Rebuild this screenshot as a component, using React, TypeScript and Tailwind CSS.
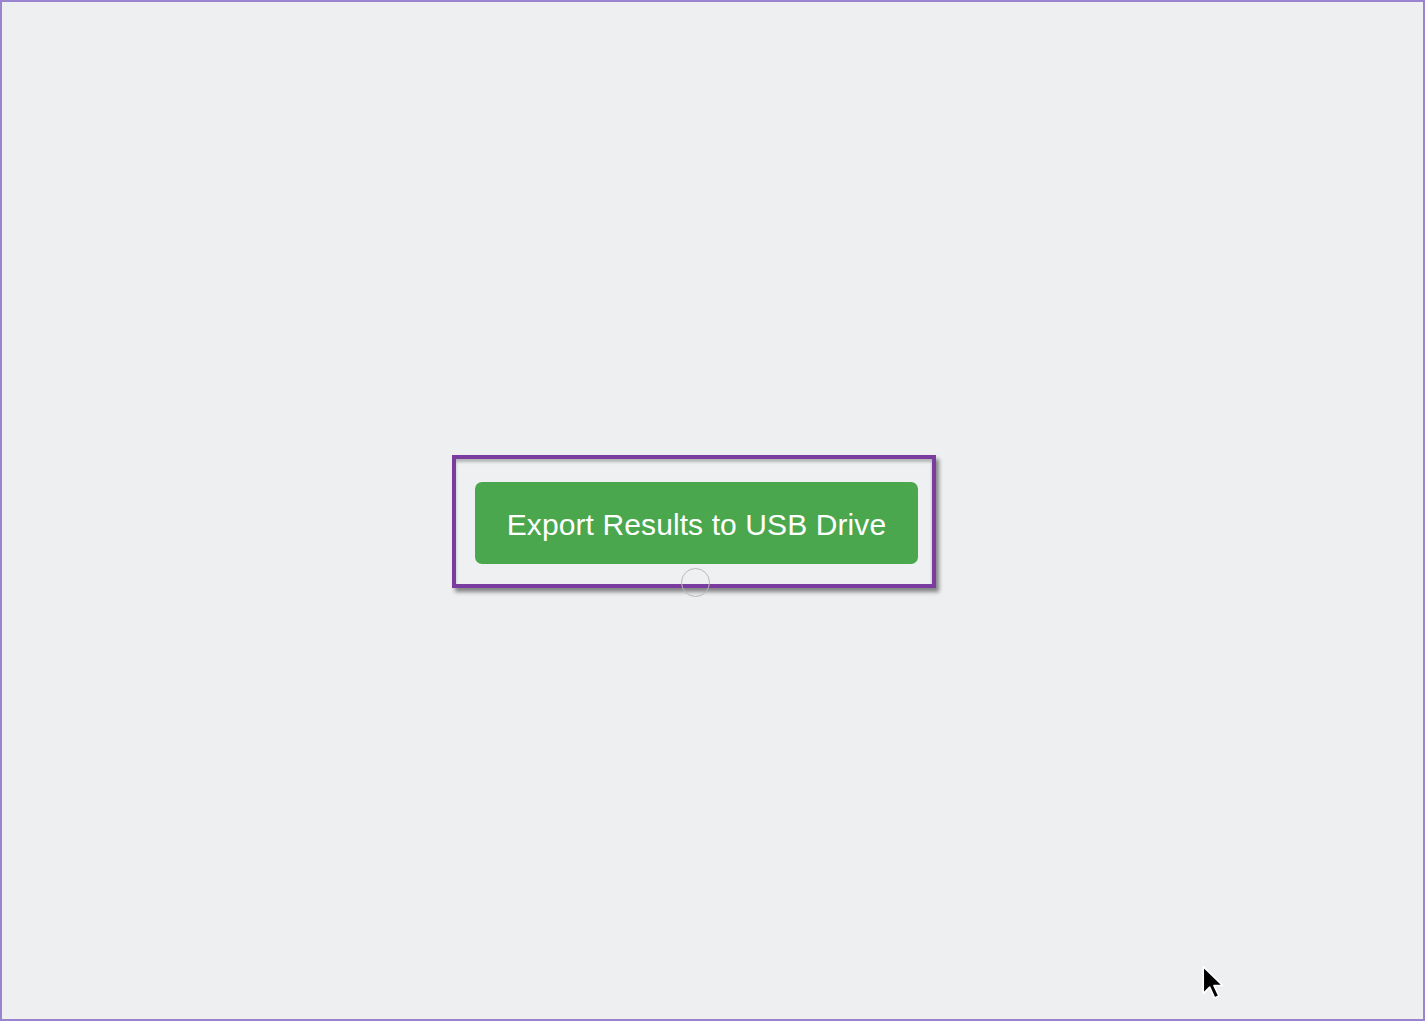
export default function App() {
  return (
    <div className="w-[1426px] h-[1022px] bg-white">
      <div className="relative w-[1425px] h-[1021px] border-2 border-[#9b84cf] bg-[#eeeff1] pl-[450px] pt-[453px]">
        <div className="relative w-[484px] h-[133px] border-4 border-[#7b3c9f] bg-[#eff0f2] pl-[19px] pt-[23px] shadow-[3px_4px_4px_rgba(0,0,0,0.45),inset_0_3px_3px_rgba(0,0,0,0.25)]">
          <button
            type="button"
            className="flex items-center justify-center w-[443px] h-[82px] pt-[2px] rounded-[7px] bg-[#4aa74e] text-white text-[30px] font-['Liberation_Sans',Arial,sans-serif] tracking-[0.1px]"
          >
            Export Results to USB Drive
          </button>
          <div className="absolute left-[225px] top-[109px] w-[29px] h-[29px] rounded-full border border-[#b8b9bb]" />
        </div>
        <svg
          className="absolute left-[1198px] top-[962px]"
          width="28"
          height="42"
          viewBox="0 0 26 38"
        >
          <path
            d="M3 2 L3 27 L9 21 L13.5 31 L17.5 29.2 L13 19.5 L21 19.5 Z"
            fill="#000"
            stroke="#fff"
            strokeWidth="1.5"
            strokeLinejoin="round"
          />
        </svg>
      </div>
    </div>
  );
}
